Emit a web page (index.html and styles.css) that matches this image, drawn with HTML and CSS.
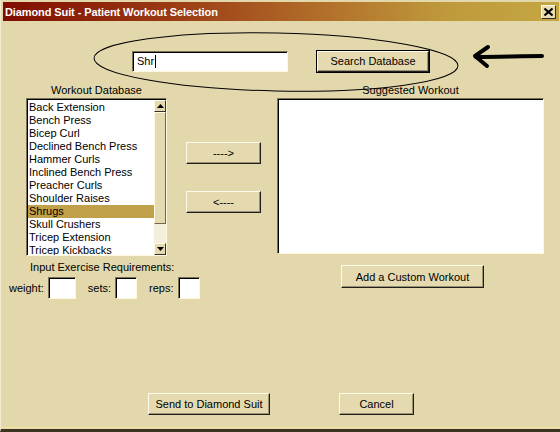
FILE: index.html
```html
<!DOCTYPE html>
<html lang="en">
<head>
    <meta charset="UTF-8">
    <title>Diamond Suit - Patient Workout Selection</title>
    <link rel="stylesheet" href="styles.css">
</head>
<body>
<div class="window">
    <div class="titlebar">
        <span class="title">Diamond Suit - Patient Workout Selection</span>
        <button class="close-btn">
            <svg width="9" height="8" viewBox="0 0 9 8"><path d="M0.5 0.5 L8.5 7.5 M8.5 0.5 L0.5 7.5" stroke="#000" stroke-width="2"/></svg>
        </button>
    </div>

    <!-- search -->
    <div class="search-row">
        <div class="textbox search-box">Shr<span class="caret"></span></div>
        <button class="btn default-btn search-btn">Search Database</button>
    </div>

    <!-- hand drawn marks over the form -->
    <svg class="scribble" width="560" height="110" viewBox="0 0 560 110">
        <ellipse cx="275" cy="41" rx="182" ry="29" fill="none" stroke="#000" stroke-width="1" transform="rotate(1.2 275 41)"/>
        <path d="M541 35 C520 35 500 36 475 36" stroke="#000" stroke-width="4" fill="none" stroke-linecap="round"/>
        <path d="M487 26 L474 35 L486 45" stroke="#000" stroke-width="4" fill="none" stroke-linecap="round" stroke-linejoin="round"/>
    </svg>

    <div class="lists-row">
        <div class="col-left">
            <div class="col-label">Workout Database</div>
            <div class="listbox">
                <ul class="items">
                    <li>Back Extension</li>
                    <li>Bench Press</li>
                    <li>Bicep Curl</li>
                    <li>Declined Bench Press</li>
                    <li>Hammer Curls</li>
                    <li>Inclined Bench Press</li>
                    <li>Preacher Curls</li>
                    <li>Shoulder Raises</li>
                    <li class="selected">Shrugs</li>
                    <li>Skull Crushers</li>
                    <li>Tricep Extension</li>
                    <li>Tricep Kickbacks</li>
                </ul>
                <div class="scrollbar">
                    <div class="sb-btn">
                        <svg width="7" height="4" viewBox="0 0 7 4"><path d="M0 4 L3.5 0 L7 4 Z" fill="#000"/></svg>
                    </div>
                    <div class="sb-thumb"></div>
                    <div class="sb-track"></div>
                    <div class="sb-btn">
                        <svg width="7" height="4" viewBox="0 0 7 4"><path d="M0 0 L3.5 4 L7 0 Z" fill="#000"/></svg>
                    </div>
                </div>
            </div>
        </div>
        <div class="col-mid">
            <button class="btn move-btn">----&gt;</button>
            <button class="btn move-btn">&lt;----</button>
        </div>
        <div class="col-right">
            <div class="col-label">Suggested Workout</div>
            <div class="textbox suggested"></div>
        </div>
    </div>

    <div class="lower-row">
        <div class="requirements">
            <div class="req-label">Input Exercise Requirements:</div>
            <div class="req-fields">
                <span>weight:</span><div class="textbox small-box"></div>
                <span class="field-gap">sets:</span><div class="textbox small-box narrow"></div>
                <span class="field-gap">reps:</span><div class="textbox small-box narrow"></div>
            </div>
        </div>
        <button class="btn custom-btn">Add a Custom Workout</button>
    </div>

    <div class="bottom-row">
        <button class="btn send-btn">Send to Diamond Suit</button>
        <button class="btn cancel-btn">Cancel</button>
    </div>
</div>
</body>
</html>
```

FILE: styles.css
```css
html, body {
    margin: 0;
    padding: 0;
    background-color: #e3d8ac;
}

.window {
    position: relative;
    width: 560px;
    height: 432px;
    box-sizing: border-box;
    background-color: #e3d8ac;
    border-left: 1px solid #f3ecd0;
    border-bottom: 3px solid #3a3420;
    font-family: "Liberation Sans", Arial, sans-serif;
    font-size: 11px;
    color: #000;
    overflow: hidden;
}

.window::after {
    content: "";
    position: absolute;
    left: 0;
    right: 0;
    bottom: 1px;
    height: 1px;
    background-color: #f2e39a;
}

.titlebar {
    display: flex;
    align-items: center;
    justify-content: space-between;
    height: 19px;
    margin: 2px 1px 0 2px;
    padding: 0 3px 0 2px;
    background: linear-gradient(to right, #800c00 0%, #9a3a14 30%, #b06a28 55%, #bf9a3c 80%, #c4a644 100%);
}

.title {
    color: #fff;
    font-weight: bold;
    font-size: 11px;
    letter-spacing: -0.1px;
}

.close-btn {
    width: 15px;
    height: 14px;
    padding: 0;
    display: flex;
    align-items: center;
    justify-content: center;
    background-color: #e8dcb0;
    border: 1px solid;
    border-color: #fff8e0 #303030 #303030 #fff8e0;
}

/* generic controls */
.btn {
    font-family: "Liberation Sans", Arial, sans-serif;
    font-size: 11px;
    color: #000;
    background-color: #e5daaf;
    border: 1px solid;
    border-color: #fffbe6 #1e1e1e #1e1e1e #fffbe6;
    box-shadow: inset -1px -1px 0 #9c9272;
    padding: 0;
    height: 23px;
}

.default-btn {
    outline: 1px solid #000;
    outline-offset: 0;
}

.textbox {
    background-color: #fff;
    box-sizing: border-box;
    border: 1px solid;
    border-color: #7a7257 #fff8dc #fff8dc #7a7257;
    box-shadow: inset 1px 1px 0 #000;
}

.search-row {
    display: flex;
    align-items: center;
    margin-top: 29px;
    padding-left: 131px;
    height: 22px;
}

.search-box {
    width: 156px;
    height: 21px;
    padding: 3px 0 0 4px;
    font-size: 11px;
}

.caret {
    display: inline-block;
    width: 1px;
    height: 13px;
    background-color: #000;
    vertical-align: -3px;
    margin-left: 1px;
}

.search-btn {
    width: 112px;
    height: 21px;
    margin-left: 29px;
}

.scribble {
    position: absolute;
    left: 0;
    top: 21px;
    pointer-events: none;
}

.lists-row {
    display: flex;
    margin-top: 12px;
    padding-left: 25px;
}

.col-label {
    text-align: center;
    height: 14px;
    line-height: 12px;
}

.col-left {
    width: 141px;
}

.listbox {
    display: flex;
    height: 158px;
    box-sizing: border-box;
    background-color: #fff;
    border: 1px solid;
    border-color: #7a7257 #fff8dc #fff8dc #7a7257;
    box-shadow: inset 1px 1px 0 #000;
    padding: 1px 0 0 1px;
    overflow: hidden;
}

.items {
    list-style: none;
    margin: 0;
    padding: 1px 0 0 0;
    flex: 1;
    overflow: hidden;
}

.items li {
    height: 13px;
    line-height: 13px;
    padding-left: 1px;
    white-space: nowrap;
    color: #000;
}

.items li.selected {
    background-color: #c0a048;
}

.scrollbar {
    width: 12px;
    display: flex;
    flex-direction: column;
    background-color: #f4efdc;
}

.sb-btn {
    height: 12px;
    box-sizing: border-box;
    display: flex;
    align-items: center;
    justify-content: center;
    background-color: #e5daaf;
    border: 1px solid;
    border-color: #fffbe6 #303030 #303030 #fffbe6;
}

.sb-thumb {
    height: 112px;
    box-sizing: border-box;
    background-color: #e5daaf;
    border: 1px solid;
    border-color: #fffbe6 #6e6650 #6e6650 #fffbe6;
}

.sb-track {
    flex: 1;
    background-color: #f4efdc;
}

.col-mid {
    width: 75px;
    margin-left: 19px;
    padding-top: 58px;
    display: flex;
    flex-direction: column;
    gap: 27px;
}

.move-btn {
    width: 75px;
    height: 22px;
}

.col-right {
    width: 267px;
    margin-left: 16px;
}

.suggested {
    height: 156px;
}

.lower-row {
    display: flex;
    height: 137px;
}

.requirements {
    width: 330px;
}

.req-label {
    margin: 5px 0 0 29px;
    height: 14px;
}

.req-fields {
    display: flex;
    align-items: center;
    margin-top: 2px;
    padding-left: 8px;
}

.req-fields span {
    margin-right: 4px;
}

.field-gap {
    margin-left: 12px;
}

.small-box {
    width: 28px;
    height: 22px;
}

.small-box.narrow {
    width: 22px;
}

.custom-btn {
    width: 143px;
    height: 23px;
    margin: 9px 0 0 10px;
}

.bottom-row {
    display: flex;
    padding-left: 147px;
}

.send-btn {
    width: 122px;
    height: 22px;
}

.cancel-btn {
    width: 75px;
    height: 22px;
    margin-left: 69px;
}
```
